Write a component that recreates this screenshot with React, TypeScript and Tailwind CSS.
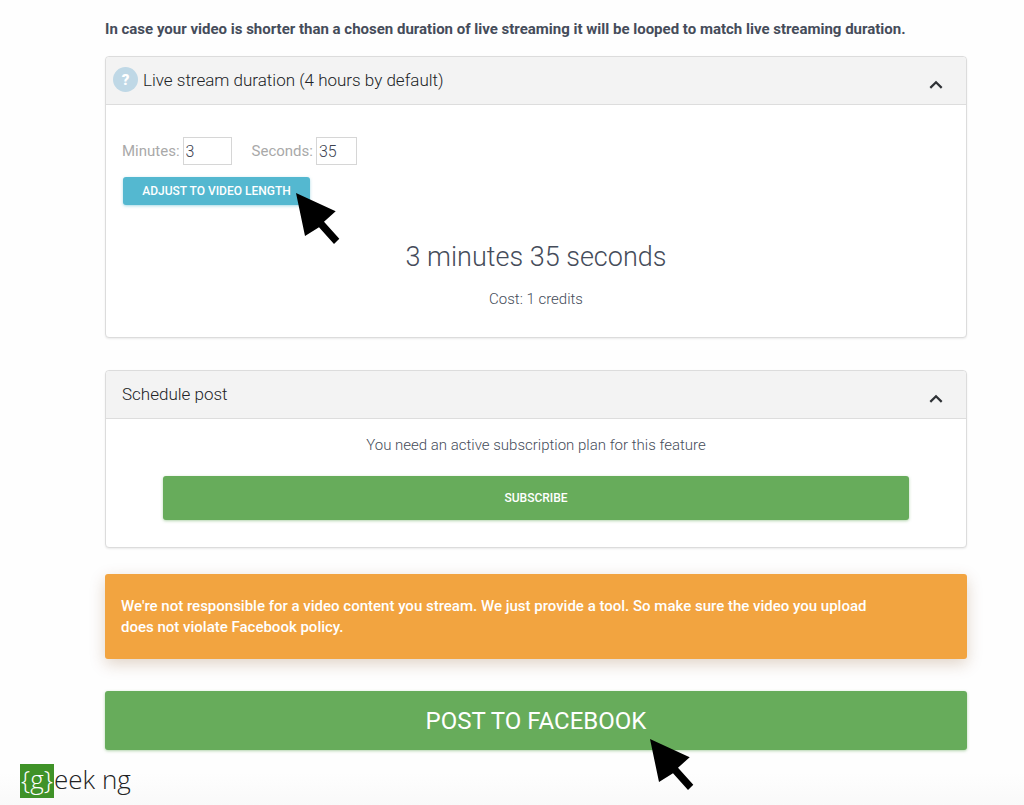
import React, { useState } from "react";

type PanelProps = {
  title: string;
  help?: boolean;
  className?: string;
  children: React.ReactNode;
};

function Chevron({ open }: { open: boolean }) {
  return (
    <svg
      width="14"
      height="10"
      viewBox="0 0 14 10"
      fill="none"
      stroke="#2f3236"
      strokeWidth="2.2"
      aria-hidden="true"
      className={open ? "" : "rotate-180"}
    >
      <path d="M1.3 7.9 L7 2.2 L12.7 7.9" />
    </svg>
  );
}

function Pointer() {
  return (
    <svg width="44" height="52" viewBox="0 0 44 52" fill="#000" aria-hidden="true">
      <path d="M0 0 L39.7 18.3 L28 28.7 L43.3 45.7 L38 51 L23 34.3 L9 43 Z" />
    </svg>
  );
}

function Panel({ title, help, className = "", children }: PanelProps) {
  const [open, setOpen] = useState(true);

  return (
    <section className={`rounded border border-[#dcdcdc] bg-white shadow-[0_1px_2px_rgba(0,0,0,0.08)] ${className}`}>
      <button
        type="button"
        aria-expanded={open}
        onClick={() => setOpen(!open)}
        className={`flex h-12 w-full items-center justify-between rounded-t border-b border-[#dddddd] bg-[#f3f3f3] pr-[23px] text-left ${
          help ? "pl-[7px]" : "pl-4"
        }`}
      >
        <span className="flex items-center gap-[5px] pb-0.5 text-[17px] leading-6 font-light text-[#212326]">
          {help && (
            <span className="flex h-[25px] w-[25px] items-center justify-center rounded-full bg-[#bfd8e6] text-[15px] font-black text-white">
              ?
            </span>
          )}
          {title}
        </span>
        <span className="pt-2">
          <Chevron open={open} />
        </span>
      </button>
      {open && children}
    </section>
  );
}

export default function App() {
  const [minutes, setMinutes] = useState("3");
  const [seconds, setSeconds] = useState("35");

  return (
    <div className="min-h-screen bg-[linear-gradient(to_top,#f9f9f9,#fefefe_32px)] font-[Roboto,sans-serif] text-[#454c5a]">
      <main className="pt-[18px] pr-[57px] pl-[105px]">
        <p className="text-[15px] leading-[22px] font-bold">
          In case your video is shorter than a chosen duration of live streaming it will be looped to match live
          streaming duration.
        </p>

        <Panel title="Live stream duration (4 hours by default)" help className="mt-4">
          <div className="px-4 pt-8 pb-7">
            <div className="flex items-center text-[15px] text-[#a9a9a9]">
              <label htmlFor="minutes">Minutes:</label>
              <input
                id="minutes"
                value={minutes}
                onChange={(e) => setMinutes(e.target.value)}
                className="ml-[3px] h-7 w-[49px] border border-[#d6d6d6] bg-white px-0.5 text-[16px] font-light text-[#3c4250]"
              />
              <label htmlFor="seconds" className="ml-5">
                Seconds:
              </label>
              <input
                id="seconds"
                value={seconds}
                onChange={(e) => setSeconds(e.target.value)}
                className="ml-[3px] h-7 w-[41px] border border-[#d6d6d6] bg-white px-0.5 text-[16px] font-light text-[#3c4250]"
              />
            </div>

            <div className="relative mt-3 ml-px w-[187px]">
              <button
                type="button"
                className="h-7 w-full rounded-[3px] bg-[#54b8d0] text-[12px] leading-4 font-medium text-white uppercase shadow-[0_1px_3px_rgba(84,184,208,0.5)]"
              >
                Adjust to video length
              </button>
              <div className="pointer-events-none absolute top-4 left-[173px]">
                <Pointer />
              </div>
            </div>

            <p className="mt-8 text-center text-[27px] leading-10 font-light">
              {minutes} minutes {seconds} seconds
            </p>
            <p className="mt-3 text-center text-[15px] leading-5 font-light">Cost: 1 credits</p>
          </div>
        </Panel>

        <Panel title="Schedule post" className="mt-8">
          <div className="px-[57px] pt-4 pb-[27px]">
            <p className="text-center text-[15px] leading-[21px] font-light">
              You need an active subscription plan for this feature
            </p>
            <button
              type="button"
              className="mt-5 h-11 w-full rounded-[3px] bg-[#67ac5b] text-[12px] font-medium text-white uppercase shadow-[0_1px_3px_rgba(103,172,91,0.5)]"
            >
              Subscribe
            </button>
          </div>
        </Panel>

        <div
          role="alert"
          className="mt-[26px] rounded-[3px] bg-[#f2a440] pt-[22px] pb-[21px] pr-24 pl-4 text-[15px] leading-[21px] font-medium text-white shadow-[0_5px_16px_rgba(120,60,0,0.22)]"
        >
          We&apos;re not responsible for a video content you stream. We just provide a tool. So make sure the video you
          upload does not violate Facebook policy.
        </div>

        <button
          type="button"
          className="mt-8 block h-[59px] w-full rounded-[3px] bg-[#67ac5b] text-[24px] text-white uppercase shadow-[0_1px_3px_rgba(103,172,91,0.5)]"
        >
          <span className="relative">
            Post to Facebook
            <span className="pointer-events-none absolute top-8 left-full pl-1">
              <Pointer />
            </span>
          </span>
        </button>
      </main>

      <footer className="pt-3 pl-5">
        <a
          href="#"
          className="inline-flex items-center font-['Open_Sans',sans-serif] text-[26px] leading-[34px] font-light text-[#222222]"
        >
          <span className="flex h-[34px] w-[34px] items-center justify-center bg-[#3f9228] pb-1 text-white">
            {"{g}"}
          </span>
          <span className="pb-1">eek ng</span>
        </a>
      </footer>
    </div>
  );
}
